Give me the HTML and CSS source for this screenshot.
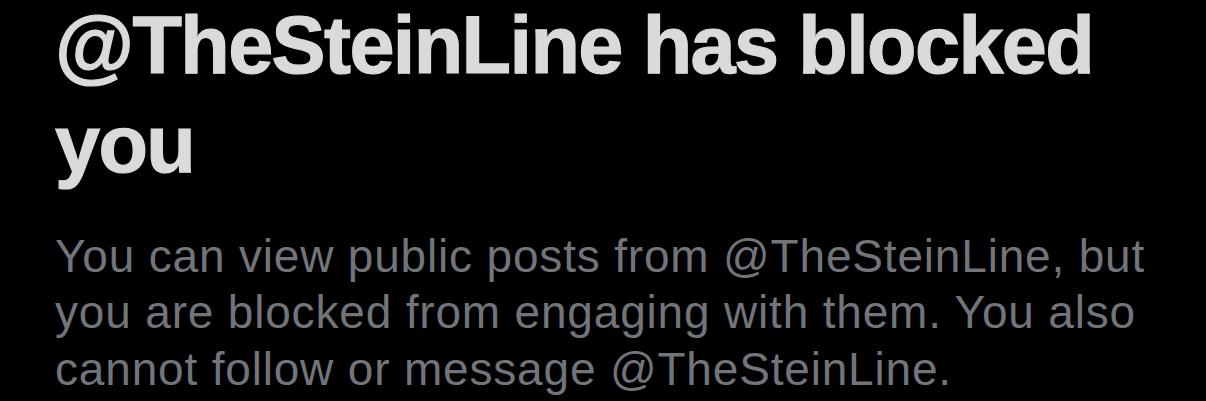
FILE: index.html
```html
<!DOCTYPE html>
<html lang="en">
<head>
<meta charset="utf-8">
<link rel="stylesheet" href="styles.css">
</head>
<body>
<main class="blocked">
  <h1 class="blocked-title">@TheSteinLine has blocked you</h1>
  <p class="blocked-text">You can view public posts from @TheSteinLine, but you are blocked from engaging with them. You also cannot follow or message @TheSteinLine.</p>
</main>
</body>
</html>
```
FILE: styles.css
```css
html, body {
  margin: 0;
  padding: 0;
  background: #000;
}
body {
  width: 1206px;
  height: 401px;
  overflow: hidden;
}
.blocked {
  display: flex;
  flex-direction: column;
  gap: 33.5px;
  padding: 0 40px 0 55px;
  margin-top: -3.6px;
}
.blocked-title {
  margin: 0;
  font-family: "Liberation Sans", Arial, sans-serif;
  font-weight: 700;
  font-size: 81px;
  line-height: 99px;
  letter-spacing: -1.6px;
  color: #dadada;
  -webkit-text-stroke: 1.2px #dadada;
  max-width: 1080px;
}
.blocked-text {
  margin: 0;
  font-family: "Liberation Sans", Arial, sans-serif;
  font-weight: 400;
  font-size: 46px;
  line-height: 56.5px;
  letter-spacing: 0.82px;
  color: #717579;
  max-width: 1105px;
}
```
